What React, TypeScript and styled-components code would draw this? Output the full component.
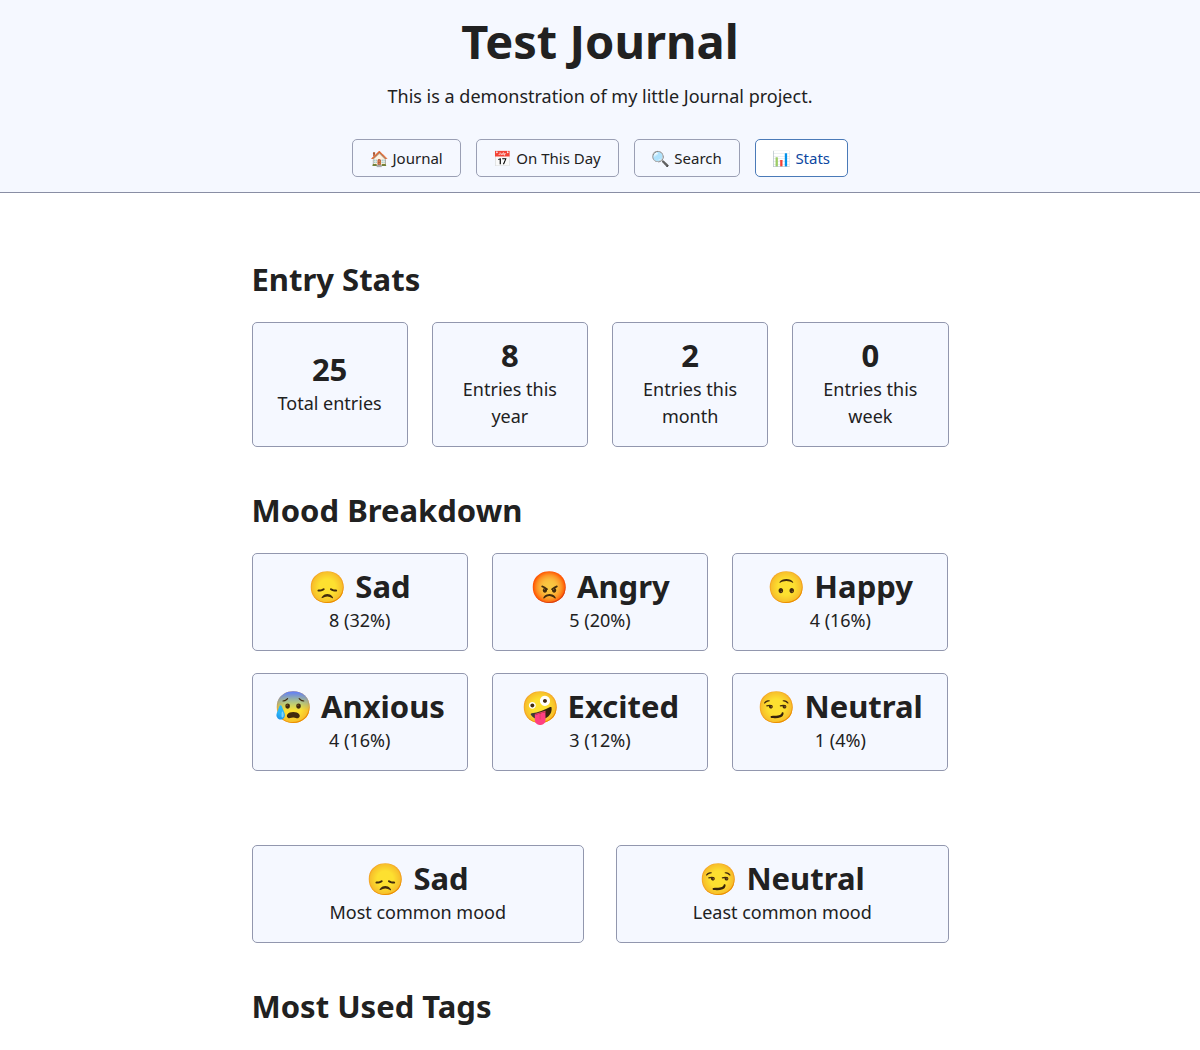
import React from "react";
import styled, { createGlobalStyle } from "styled-components";

const Global = createGlobalStyle`
  *, *::before, *::after { box-sizing: border-box; }
  html { scrollbar-width: none; }
  body {
    margin: 0;
    background: #fff;
    color: #212121;
    font-family: "Noto Sans", "Noto Color Emoji", sans-serif;
    font-size: 18px;
    line-height: 27px;
  }
`;

const Header = styled.header`
  padding: 15px 16px;
  background: #f5f8ff;
  border-bottom: 1px solid #898ea4;
  text-align: center;
`;

const Title = styled.h1`
  margin: 0;
  font-size: 47px;
  line-height: 53px;
`;

const Tagline = styled.p`
  margin: 15px 0 29px;
`;

const Nav = styled.nav`
  display: flex;
  flex-wrap: wrap;
  justify-content: center;
  gap: 15px;
`;

const NavLink = styled.a<{ $current?: boolean }>`
  padding: 8px 17px;
  border: 1px solid ${(p) => (p.$current ? "#4a7ab8" : "#9a9fb4")};
  border-radius: 5px;
  background: ${(p) => (p.$current ? "#fff" : "transparent")};
  color: ${(p) => (p.$current ? "#0d47a1" : "#212121")};
  font-size: 15px;
  line-height: 20px;
  text-decoration: none;
`;

const Main = styled.main`
  max-width: 697px;
  margin: 0 auto;
  padding: 70px 0 24px;
`;

const Section = styled.section`
  margin-bottom: 47px;
`;

const Heading = styled.h2`
  margin: 0 0 26px;
  font-size: 31px;
  line-height: 33px;
`;

const Grid = styled.div<{ $columns: number; $gap: number }>`
  display: grid;
  grid-template-columns: repeat(${(p) => p.$columns}, 1fr);
  gap: 22px ${(p) => p.$gap}px;
`;

const Extremes = styled.div`
  margin-top: 74px;
`;

const Card = styled.div`
  display: flex;
  flex-direction: column;
  align-items: center;
  justify-content: center;
  gap: 4px;
  padding: 16px;
  border: 1px solid #9297ae;
  border-radius: 5px;
  background: #f5f8ff;
  text-align: center;
`;

const Value = styled.strong`
  font-size: 31px;
  line-height: 33px;
  white-space: nowrap;
`;

const Label = styled.span``;

type Stat = { value: string; label: string };

const entryStats: Stat[] = [
  { value: "25", label: "Total entries" },
  { value: "8", label: "Entries this year" },
  { value: "2", label: "Entries this month" },
  { value: "0", label: "Entries this week" },
];

const moods: Stat[] = [
  { value: "😞 Sad", label: "8 (32%)" },
  { value: "😡 Angry", label: "5 (20%)" },
  { value: "🙃 Happy", label: "4 (16%)" },
  { value: "😰 Anxious", label: "4 (16%)" },
  { value: "🤪 Excited", label: "3 (12%)" },
  { value: "😏 Neutral", label: "1 (4%)" },
];

const extremes: Stat[] = [
  { value: "😞 Sad", label: "Most common mood" },
  { value: "😏 Neutral", label: "Least common mood" },
];

function StatGrid({ stats, columns, gap = 24 }: { stats: Stat[]; columns: number; gap?: number }) {
  return (
    <Grid $columns={columns} $gap={gap}>
      {stats.map((s) => (
        <Card key={s.value}>
          <Value>{s.value}</Value>
          <Label>{s.label}</Label>
        </Card>
      ))}
    </Grid>
  );
}

export default function App() {
  return (
    <>
      <Global />
      <Header>
        <Title>Test Journal</Title>
        <Tagline>This is a demonstration of my little Journal project.</Tagline>
        <Nav>
          <NavLink href="#journal">🏠 Journal</NavLink>
          <NavLink href="#on-this-day">📅 On This Day</NavLink>
          <NavLink href="#search">🔍 Search</NavLink>
          <NavLink href="#stats" $current aria-current="page">📊 Stats</NavLink>
        </Nav>
      </Header>
      <Main>
        <Section>
          <Heading>Entry Stats</Heading>
          <StatGrid stats={entryStats} columns={4} />
        </Section>
        <Section>
          <Heading>Mood Breakdown</Heading>
          <StatGrid stats={moods} columns={3} />
          <Extremes>
            <StatGrid stats={extremes} columns={2} gap={32} />
          </Extremes>
        </Section>
        <Heading>Most Used Tags</Heading>
      </Main>
    </>
  );
}
